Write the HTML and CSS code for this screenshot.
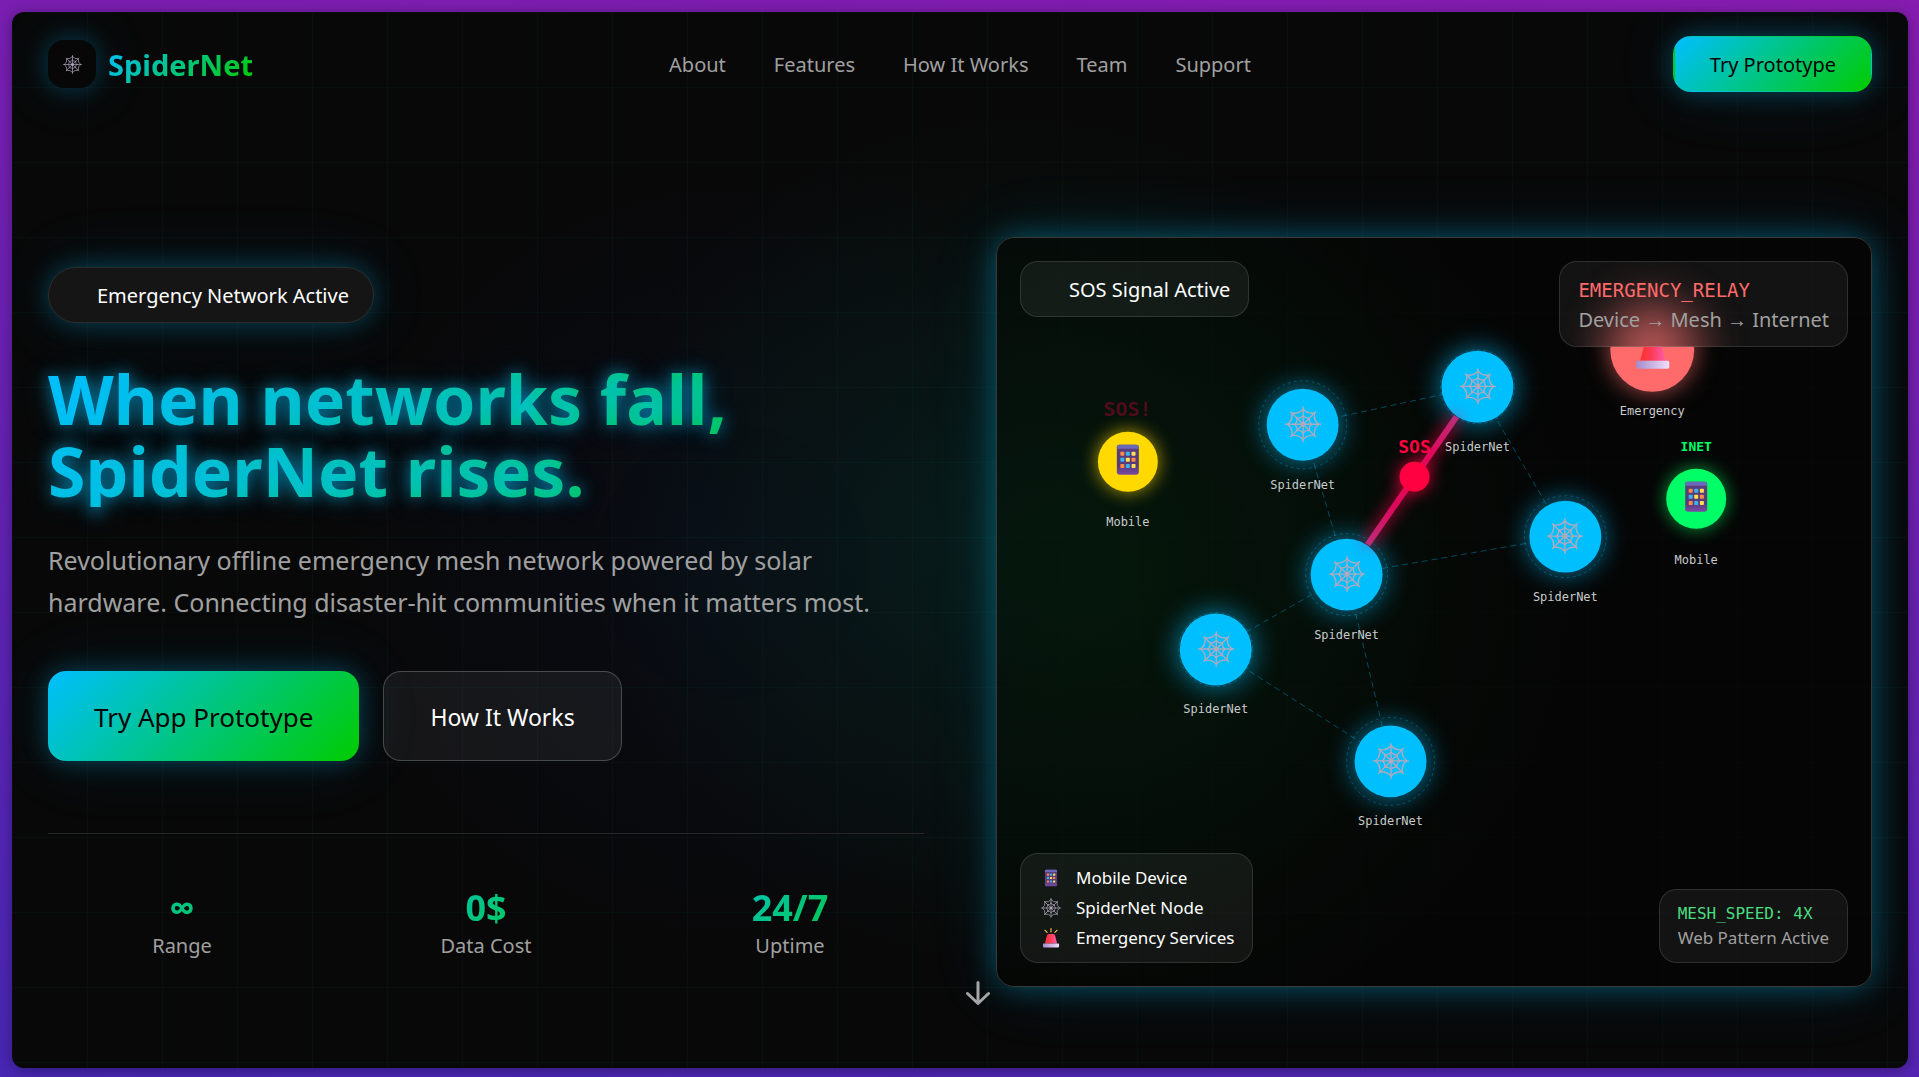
FILE: index.html
```html
<!DOCTYPE html>
<html lang="en">
<head>
<meta charset="utf-8">
<meta name="viewport" content="width=device-width, initial-scale=1">
<title>SpiderNet</title>
<link rel="stylesheet" href="styles.css">
</head>
<body>
<svg class="sprite" aria-hidden="true">
  <defs>
    <linearGradient id="phone-body" x1="0" y1="0" x2="0" y2="1">
      <stop offset="0" stop-color="#5c3f7c"/><stop offset="0.7" stop-color="#563a7b"/><stop offset="1" stop-color="#7a4aa3"/>
    </linearGradient>
    <linearGradient id="siren-dome" x1="0" y1="0" x2="1" y2="0">
      <stop offset="0" stop-color="#ff3030"/><stop offset="0.4" stop-color="#fb3a50"/><stop offset="1" stop-color="#ff5aa8"/>
    </linearGradient>
    <linearGradient id="siren-base" x1="0" y1="0" x2="1" y2="0">
      <stop offset="0" stop-color="#a58ccb"/><stop offset="1" stop-color="#f0defc"/>
    </linearGradient>
    <symbol id="web" viewBox="-18 -18 36 36">
      <g fill="none" stroke="#b3a9bd" stroke-width="1.3" stroke-linecap="round">
        <path d="M0-17V17M-17 0H17M-12-12 12 12M12-12-12 12"/>
        <path d="M0-15Q3.8-9.8 11-11Q9.8-3.8 15.500 0Q9.800 3.800 11 11Q3.800 9.800 0 15Q-3.800 9.800-11 11Q-9.800 3.800-15.500 0Q-9.800-3.800-11-11Q-3.800-9.800 0-15Z"/>
        <path d="M0-8.500Q2.300-5.500 6-6Q5.500-2.300 8.500 0Q5.500 2.300 6 6Q2.300 5.500 0 8.500Q-2.300 5.500-6 6Q-5.500 2.300-8.500 0Q-5.500-2.300-6-6Q-2.300-5.500 0-8.500Z"/>
      </g>
      <circle r="2.400" fill="#b3a9bd"/>
    </symbol>
    <symbol id="phone" viewBox="-18 -18 36 36">
      <rect x="-11" y="-15" width="22" height="30" rx="2.500" fill="url(#phone-body)"/>
      <path d="M-11-11V-12.500A2.500 2.500 0 0 1-8.500-15H8.500A2.500 2.500 0 0 1 11-12.500V-11Z" fill="#6a68b8"/>
      <g fill="#ff8a48"><rect x="-7.500" y="-8" width="4" height="4" rx=".8"/><rect x="3.700" y="-2" width="4" height="4" rx=".8"/><rect x="-7.500" y="4.300" width="4" height="4" rx=".8"/></g>
      <g fill="#35b4f0"><rect x="-2" y="-8" width="4" height="4" rx=".8"/><rect x="-7.500" y="-2" width="4" height="4" rx=".8"/><rect x="-2" y="4.300" width="4" height="4" rx=".8"/></g>
      <g fill="#ffe052"><rect x="3.700" y="-8" width="4" height="4" rx=".8"/><rect x="-2" y="-2" width="4" height="4" rx=".8"/><rect x="3.700" y="4.300" width="4" height="4" rx=".8"/></g>
    </symbol>
    <symbol id="siren" viewBox="-18 -18 36 36">
      <path d="M-11 10-7.500-4Q-6.800-7-4-7H4Q6.800-7 7.500-4L11 10Z" fill="url(#siren-dome)"/>
      <path d="M0-17V-11M-11-14-7-10M11-14 7-10" stroke="#f6c74a" stroke-width="2" stroke-linecap="round"/>
      <rect x="-14.500" y="10" width="29" height="7" rx="1.500" fill="url(#siren-base)"/>
    </symbol>
  </defs>
</svg>

<div class="app">
  <header class="topbar">
    <a class="brand" href="#">
      <span class="brand-mark"><svg class="brand-icon" aria-hidden="true"><use href="#web"/></svg></span>
      <span class="brand-name">SpiderNet</span>
    </a>
    <nav class="nav">
      <a href="#about">About</a>
      <a href="#features">Features</a>
      <a href="#how">How It Works</a>
      <a href="#team">Team</a>
      <a href="#support">Support</a>
    </nav>
    <button class="btn btn-small" type="button">Try Prototype</button>
  </header>

  <main class="hero">
    <section class="intro">
      <p class="badge">Emergency Network Active</p>
      <h1 class="title">When networks fall,<br>SpiderNet rises.</h1>
      <p class="lead">Revolutionary offline emergency mesh network powered by solar hardware. Connecting disaster-hit communities when it matters most.</p>
      <div class="actions">
        <button class="btn btn-large" type="button">Try App Prototype</button>
        <button class="btn btn-ghost" type="button">How It Works</button>
      </div>
      <dl class="stats">
        <div class="stat"><dd>∞</dd><dt>Range</dt></div>
        <div class="stat"><dd>0$</dd><dt>Data Cost</dt></div>
        <div class="stat"><dd>24/7</dd><dt>Uptime</dt></div>
      </dl>
    </section>

    <section class="mesh" aria-label="Mesh network">
      <svg class="mesh-map" viewBox="0 1 875 749">
        <defs>
          <linearGradient id="signal" gradientUnits="userSpaceOnUse" x1="350" y1="338" x2="481" y2="150">
            <stop offset="0.15" stop-color="#b8307c"/><stop offset="0.35" stop-color="#dc0a5c"/><stop offset="0.65" stop-color="#dc0a5c"/><stop offset="0.85" stop-color="#b8307c"/>
          </linearGradient>
          <clipPath id="below-panel"><rect x="560" y="110" width="200" height="120"/></clipPath>
          <clipPath id="behind-panel"><rect x="569" y="24" width="281" height="86" rx="18"/></clipPath>
        </defs>
        <g class="links">
          <path d="M306 188 481 150M306 188 350 338M481 150 569 300M569 300 350 338M350 338 219 413M350 338 394 525M219 413 394 525"/>
        </g>
        <g class="rings">
          <circle cx="306" cy="188" r="44"/><circle cx="481" cy="150" r="37"/><circle cx="350" cy="338" r="41"/>
          <circle cx="219" cy="413" r="37"/><circle cx="569" cy="300" r="41"/><circle cx="394" cy="525" r="44"/>
        </g>
        <g class="nodes">
          <circle class="node spider" cx="306" cy="188" r="36"/>
          <circle class="node spider" cx="481" cy="150" r="36"/>
          <circle class="node spider" cx="350" cy="338" r="36"/>
          <circle class="node spider" cx="219" cy="413" r="36"/>
          <circle class="node spider" cx="569" cy="300" r="36"/>
          <circle class="node spider" cx="394" cy="525" r="36"/>
          <circle class="node caller" cx="131" cy="225" r="30"/>
          <circle class="node online" cx="700" cy="262" r="30"/>
        </g>
        <g clip-path="url(#behind-panel)"><circle class="rescue-haze" cx="656" cy="113" r="46"/></g>
        <g clip-path="url(#below-panel)">
          <circle class="node rescue" cx="656" cy="113" r="42"/>
          <use href="#siren" x="636" y="92" width="41" height="41"/>
        </g>
        <path class="signal" d="M371 308 460 180"/>
        <circle class="pulse" cx="418" cy="240" r="15"/>
        <g>
          <use href="#web" x="288" y="169" width="37" height="37"/>
          <use href="#web" x="463" y="131" width="37" height="37"/>
          <use href="#web" x="332" y="319" width="37" height="37"/>
          <use href="#web" x="201" y="394" width="37" height="37"/>
          <use href="#web" x="550" y="281" width="37" height="37"/>
          <use href="#web" x="376" y="506" width="37" height="37"/>
          <use href="#phone" x="113" y="205" width="36" height="36"/>
          <use href="#phone" x="682" y="242" width="36" height="36"/>
        </g>
        <g class="node-label">
          <text x="306" y="252">SpiderNet</text>
          <text x="481" y="214">SpiderNet</text>
          <text x="350" y="402">SpiderNet</text>
          <text x="219" y="477">SpiderNet</text>
          <text x="569" y="364">SpiderNet</text>
          <text x="394" y="589">SpiderNet</text>
          <text x="131" y="289">Mobile</text>
          <text x="700" y="327">Mobile</text>
          <text x="656" y="178">Emergency</text>
        </g>
        <text class="call call-faded" x="131" y="179">SOS!</text>
        <text class="call" x="418" y="216">SOS</text>
        <text class="inet" x="700" y="214">INET</text>
      </svg>
      <div class="panel panel-status">SOS Signal Active</div>
      <div class="panel panel-relay"><code>EMERGENCY_RELAY</code><span>Device → Mesh → Internet</span></div>
      <ul class="panel panel-legend">
        <li><svg class="legend-icon" aria-hidden="true"><use href="#phone"/></svg>Mobile Device</li>
        <li><svg class="legend-icon" aria-hidden="true"><use href="#web"/></svg>SpiderNet Node</li>
        <li><svg class="legend-icon" aria-hidden="true"><use href="#siren"/></svg>Emergency Services</li>
      </ul>
      <div class="panel panel-speed"><code>MESH_SPEED: 4X</code><span>Web Pattern Active</span></div>
    </section>
  </main>

  <a class="scroll-hint" href="#about" aria-label="Scroll down">
    <svg viewBox="0 0 24 24" aria-hidden="true"><path d="M12 1.500V22M1.500 12.500 12 22.500 22.500 12.500"/></svg>
  </a>
</div>
</body>
</html>
```
FILE: styles.css
```css
:root {
  --cyan: #00bfff;
  --green: #00cc00;
  --brand: linear-gradient(135deg, var(--cyan), var(--green));
  --muted: #a0a0a0;
  --glow: 0 0 26px rgba(0, 191, 255, .3), 0 0 70px rgba(0, 191, 255, .1);
  --sans: "Noto Sans", "Open Sans", sans-serif;
  --mono: "DejaVu Sans Mono", monospace;
}

* { box-sizing: border-box; margin: 0; padding: 0; }

body {
  display: flex;
  min-height: 100vh;
  padding: 12px 11px 9px 12px;
  background: linear-gradient(188deg, #861cb0, #4727b4);
  color: #fff;
  font: 20px/28px var(--sans);
}

a { color: inherit; text-decoration: none; }
ul { list-style: none; }
.sprite { position: absolute; width: 0; height: 0; }

.app {
  position: relative;
  display: flex;
  flex: 1;
  flex-direction: column;
  overflow: hidden;
  border-radius: 12px;
  background:
    linear-gradient(90deg, rgba(0, 220, 190, .03) 1px, transparent 1px) 0 0 / 75px 75px,
    linear-gradient(rgba(0, 220, 190, .03) 1px, transparent 1px) 0 0 / 75px 75px,
    radial-gradient(circle 430px at 53% 50%, rgba(0, 190, 130, .11), rgba(0, 190, 130, .05) 50%, transparent),
    radial-gradient(circle 420px at 38% 52%, rgba(20, 40, 140, .09), transparent),
    #080808;
  box-shadow: 0 2px 14px rgba(0, 0, 0, .35);
}

.topbar {
  display: grid;
  grid-template-columns: 1fr auto 1fr;
  align-items: center;
  padding: 24px 36px;
}

.brand { display: flex; align-items: center; gap: 12px; justify-self: start; }
.brand-mark {
  display: grid;
  place-items: center;
  width: 48px;
  height: 48px;
  border-radius: 16px;
  background: #070707;
  box-shadow: var(--glow);
}
.brand-icon { width: 19px; height: 19px; }
.brand-name {
  padding-top: 2px;
  background: var(--brand);
  background-clip: text;
  color: transparent;
  font-size: 29px;
  font-weight: 700;
  line-height: 40px;
}

.nav { display: flex; gap: 48px; padding-top: 2px; color: var(--muted); }

.btn {
  border: 0;
  border-radius: 18px;
  background: var(--brand);
  box-shadow: var(--glow);
  color: #050505;
  font: inherit;
}
.btn-small {
  justify-self: end;
  height: 56px;
  padding: 2px 35px 0;
  border: 1px solid transparent;
  border-left-width: 2px;
}
.btn-large { height: 90px; padding: 2px 46px 0; font-size: 26px; }
.btn-ghost {
  height: 90px;
  padding: 2px 46px 0;
  border: 1px solid rgba(255, 255, 255, .22);
  background: rgba(255, 255, 255, .06);
  box-shadow: none;
  color: #fff;
  font-size: 23px;
}

.hero {
  display: grid;
  grid-template-columns: repeat(2, minmax(0, 1fr));
  align-items: center;
  gap: 72px;
  flex: 1;
  padding: 121px 36px 81px;
}

.intro { padding-top: 2px; }
.badge {
  width: fit-content;
  padding: 14px 24px 12px 48px;
  border: 1px solid #2c2c2c;
  border-radius: 28px;
  background: #151515;
  box-shadow: var(--glow);
}
.title {
  margin-top: 40px;
  background: var(--brand);
  background-clip: text;
  color: transparent;
  font-size: 68px;
  font-weight: 700;
  line-height: 72px;
  text-shadow: 0 0 16px rgba(0, 191, 255, .6), 0 0 30px rgba(0, 191, 255, .3);
}
.lead { margin-top: 32px; color: var(--muted); font-size: 25px; line-height: 42px; }
.actions { display: flex; gap: 24px; margin-top: 48px; }
.stats {
  display: grid;
  grid-template-columns: repeat(3, 1fr);
  gap: 36px;
  margin-top: 72px;
  padding-top: 50px;
  border-top: 1px solid #262828;
  text-align: center;
}
.stat dd {
  background: var(--brand);
  background-clip: text;
  color: transparent;
  font-size: 36px;
  font-weight: 700;
  line-height: 48px;
}
.stat dt { color: var(--muted); }

.mesh {
  position: relative;
  border: 1px solid #383a3a;
  border-radius: 18px;
  background:
    radial-gradient(circle 480px at 12% 45%, rgba(0, 150, 40, .09), transparent),
    rgba(5, 5, 5, .65);
  box-shadow: 0 0 30px rgba(0, 191, 255, .35), 0 0 70px rgba(0, 191, 255, .12);
}
.mesh-map { display: block; width: 100%; }
.mesh-map text { font-family: var(--mono); text-anchor: middle; }
.links path { fill: none; stroke: rgba(0, 191, 255, .35); stroke-width: 1px; stroke-dasharray: 6 4; }
.rings circle { fill: none; stroke: rgba(0, 191, 255, .3); stroke-width: 1px; stroke-dasharray: 3 3; }
.spider { fill: var(--cyan); filter: drop-shadow(0 0 14px rgba(0, 191, 255, .7)); }
.caller { fill: #ffd900; filter: drop-shadow(0 0 9px rgba(255, 217, 0, .7)); }
.online { fill: #00ff66; filter: drop-shadow(0 0 9px rgba(0, 255, 102, .6)); }
.rescue { fill: #ff6b6b; filter: drop-shadow(0 0 12px rgba(255, 107, 107, .7)); }
.rescue-haze { fill: #ff6b6b; opacity: .7; filter: blur(24px); }
.signal { stroke: url(#signal); stroke-width: 6px; filter: drop-shadow(0 0 8px #ff0048); }
.pulse { fill: #ff0040; filter: drop-shadow(0 0 9px rgba(255, 0, 64, .8)); }
.node-label { fill: #c8cccc; font-size: 12px; }
.call { fill: #ff0040; font-size: 18px; font-weight: 700; }
.call-faded { opacity: .3; font-size: 20px; }
.inet { fill: #00ff66; font-size: 13px; font-weight: 700; }

.panel {
  position: absolute;
  border: 1px solid rgba(255, 255, 255, .12);
  border-radius: 18px;
  background: rgba(255, 255, 255, .06);
}
.panel code, .panel span { display: block; }
.panel code { font-family: var(--mono); }
.panel span { color: var(--muted); }
.panel-status { top: 23px; left: 23px; padding: 14px 18px 12px 48px; }
.panel-relay { top: 23px; right: 23px; padding: 13px 18px 11px; line-height: 30px; }
.panel-relay code { color: #ff6b6b; font-size: 19px; }
.panel-legend { bottom: 23px; left: 23px; padding: 9px 18px; font-size: 17px; line-height: 30px; }
.panel-legend li { display: flex; align-items: center; gap: 15px; }
.legend-icon { width: 20px; height: 20px; margin-left: 2px; }
.panel-speed { right: 23px; bottom: 23px; padding: 12px 18px; font-size: 17px; line-height: 24px; }
.panel-speed code { color: #4ade80; font-size: 16px; }

.scroll-hint { position: absolute; bottom: 63px; left: 50%; margin-left: 6px; width: 24px; height: 24px; }
.scroll-hint svg { display: block; fill: none; stroke: #a4a6a6; stroke-width: 3px; stroke-linecap: round; stroke-linejoin: round; }
```
